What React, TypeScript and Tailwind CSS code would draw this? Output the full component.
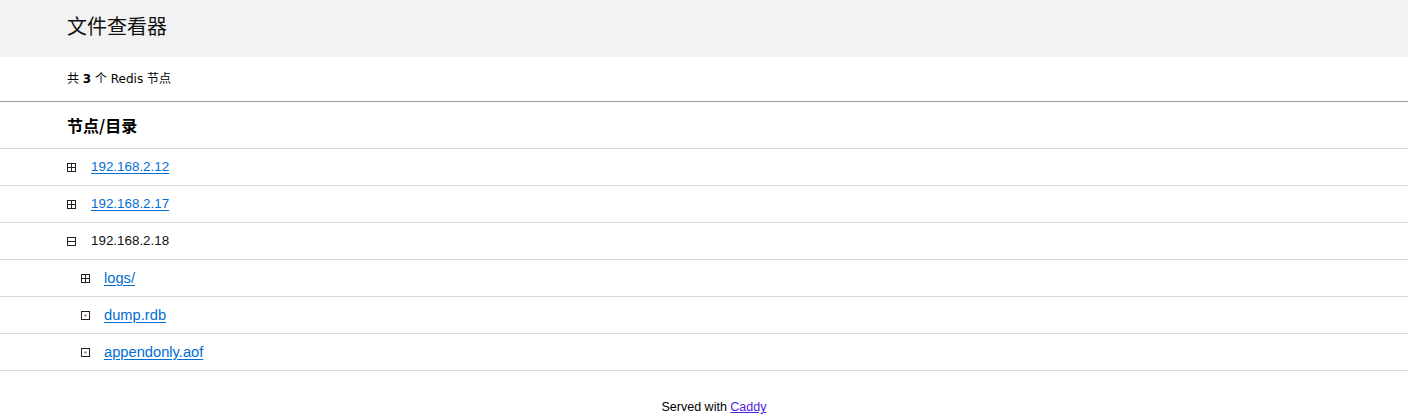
import React from "react";

const sans = { fontFamily: '"Liberation Sans", "Noto Sans CJK SC", sans-serif' };

function PlusBox() {
  return (
    <svg width="9" height="9" viewBox="0 0 9 9" className="shrink-0">
      <rect x="0.5" y="0.5" width="8" height="8" fill="none" stroke="#222" strokeWidth="1" />
      <line x1="4.5" y1="1" x2="4.5" y2="8" stroke="#222" strokeWidth="1" />
      <line x1="1" y1="4.5" x2="8" y2="4.5" stroke="#222" strokeWidth="1" />
    </svg>
  );
}
function MinusBox() {
  return (
    <svg width="9" height="9" viewBox="0 0 9 9" className="shrink-0">
      <rect x="0.5" y="0.5" width="8" height="8" fill="none" stroke="#222" strokeWidth="1" />
      <line x1="1" y1="4.5" x2="8" y2="4.5" stroke="#222" strokeWidth="1" />
    </svg>
  );
}
function DotBox() {
  return (
    <svg width="9" height="9" viewBox="0 0 9 9" className="shrink-0">
      <rect x="0.5" y="0.5" width="8" height="8" fill="none" stroke="#222" strokeWidth="1" />
      <rect x="3.5" y="3.5" width="2" height="2" fill="#b0663a" />
    </svg>
  );
}

type Row = { icon: "plus" | "minus" | "dot"; label: string; link: boolean; indent: boolean };

const rows: Row[] = [
  { icon: "plus", label: "192.168.2.12", link: true, indent: false },
  { icon: "plus", label: "192.168.2.17", link: true, indent: false },
  { icon: "minus", label: "192.168.2.18", link: false, indent: false },
  { icon: "plus", label: "logs/", link: true, indent: true },
  { icon: "dot", label: "dump.rdb", link: true, indent: true },
  { icon: "dot", label: "appendonly.aof", link: true, indent: true },
];

export default function App() {
  return (
    <div className="w-[1408px] min-h-[419px] bg-white text-black" style={sans}>
      <header className="h-[57px] bg-[#f2f2f2] flex items-center pl-[67px] pb-[6px]">
        <h1
          className="text-[20px] leading-none text-[#111]"
          style={{ fontFamily: '"Noto Sans CJK SC", sans-serif' }}
        >
          文件查看器
        </h1>
      </header>
      <div
        className="h-[45px] border-b border-[#9c9c9c] flex items-center pl-[67px] text-[12px]"
        style={{ fontFamily: '"DejaVu Sans", "Noto Sans CJK SC", sans-serif' }}
      >
        <span>
          共 <b>3</b> 个 Redis 节点
        </span>
      </div>
      <div
        className="h-[47px] border-b border-[#dadada] flex items-center pl-[67px] text-[16px] font-bold"
        style={{ fontFamily: '"Noto Sans CJK SC", sans-serif' }}
      >
        节点/目录
      </div>
      {rows.map((r) => (
        <div
          key={r.label}
          className={
            "h-[37px] border-b border-[#dadada] flex items-center " +
            (r.indent ? "pl-[81px] gap-[14px] text-[14.7px]" : "pl-[67px] gap-[15px] text-[13.4px]")
          }
        >
          {r.icon === "plus" ? <PlusBox /> : r.icon === "minus" ? <MinusBox /> : <DotBox />}
          {r.link ? (
            <a className="text-[#006ed3] underline underline-offset-2" href="#">
              {r.label}
            </a>
          ) : (
            <span className="text-[#111]">{r.label}</span>
          )}
        </div>
      ))}
      <footer className="pt-[27px] pl-[20px] text-center text-[12.5px]">
        Served with{" "}
        <a className="text-[#5020e0] underline" href="#">
          Caddy
        </a>
      </footer>
    </div>
  );
}
